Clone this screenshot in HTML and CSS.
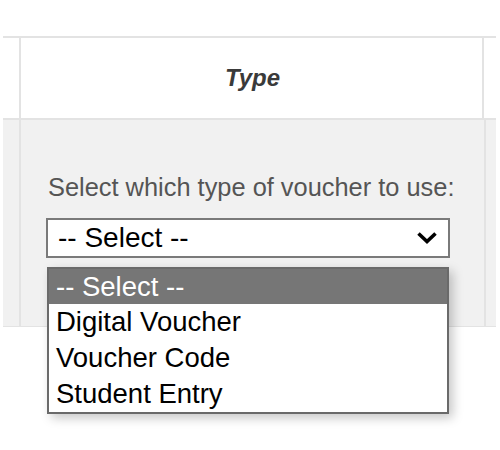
FILE: index.html
```html
<!DOCTYPE html>
<html>
<head>
<meta charset="utf-8">
<link rel="stylesheet" href="styles.css">
</head>
<body>
<div class="table">
  <div class="row head">
    <div class="side-l"></div>
    <div class="cell head-cell">Type</div>
    <div class="side-r"></div>
  </div>
  <div class="row body">
    <div class="side-l"></div>
    <div class="cell body-cell">
      <div class="label">Select which type of voucher to use:</div>
      <div class="select-wrap">
        <div class="select">
          <span class="select-text">-- Select --</span>
          <svg class="chev" width="22" height="14" viewBox="0 0 22 14"><path d="M2.5 2.5 L11 10.5 L19.5 2.5" fill="none" stroke="#000" stroke-width="3.6"/></svg>
        </div>
        <div class="listbox">
          <div class="opt selected">-- Select --</div>
          <div class="opt">Digital Voucher</div>
          <div class="opt">Voucher Code</div>
          <div class="opt">Student Entry</div>
        </div>
      </div>
    </div>
    <div class="side-r"></div>
  </div>
</div>
</body>
</html>
```
FILE: styles.css
```css
html, body {
  margin: 0;
  padding: 0;
  background: #fff;
  font-family: "Liberation Sans", Arial, sans-serif;
}
body {
  min-height: 450px;
}
.table {
  margin: 36px 4px 0 3px;
  border-top: 2px solid #e3e3e3;
}
.row {
  display: grid;
  grid-template-columns: 16px 1fr 12px;
}
.cell {
  border-left: 2px solid #e3e3e3;
  border-right: 2px solid #e3e3e3;
}
.head {
  height: 80px;
  border-bottom: 2px solid #e3e3e3;
}
.head-cell {
  display: flex;
  align-items: center;
  justify-content: center;
  font-weight: bold;
  font-style: italic;
  font-size: 24px;
  color: #3a3a3a;
  padding-left: 2px;
}
.body {
  height: 206px;
  background: #f1f1f1;
  border-bottom: 1px solid #e3e3e3;
}
.body-cell {
  position: relative;
  z-index: 2;
  padding: 52px 30px 0 25px;
}
.label {
  font-size: 25.4px;
  line-height: 30px;
  color: #555;
  margin-left: 2px;
  white-space: nowrap;
}
.select-wrap {
  position: relative;
  margin-top: 16px;
  width: 404px;
}
.select {
  box-sizing: border-box;
  height: 40px;
  background: #fff;
  border: 2px solid #7a7a7a;
  display: flex;
  align-items: center;
  justify-content: space-between;
  padding: 0 10px 0 10px;
}
.select-text {
  font-size: 28px;
  color: #000;
}
.chev {
  display: block;
}
.listbox {
  position: absolute;
  top: 49px;
  left: 1px;
  width: 402px;
  box-sizing: border-box;
  background: #fff;
  border: 2px solid #6a6a6a;
  box-shadow: 4px 4px 10px rgba(0, 0, 0, 0.22);
}
.opt {
  height: 36px;
  line-height: 36px;
  font-size: 27.5px;
  color: #000;
  padding-left: 7px;
  white-space: nowrap;
}
.opt.selected {
  background: #767676;
  color: #fff;
  height: 35px;
  line-height: 35px;
}
```
